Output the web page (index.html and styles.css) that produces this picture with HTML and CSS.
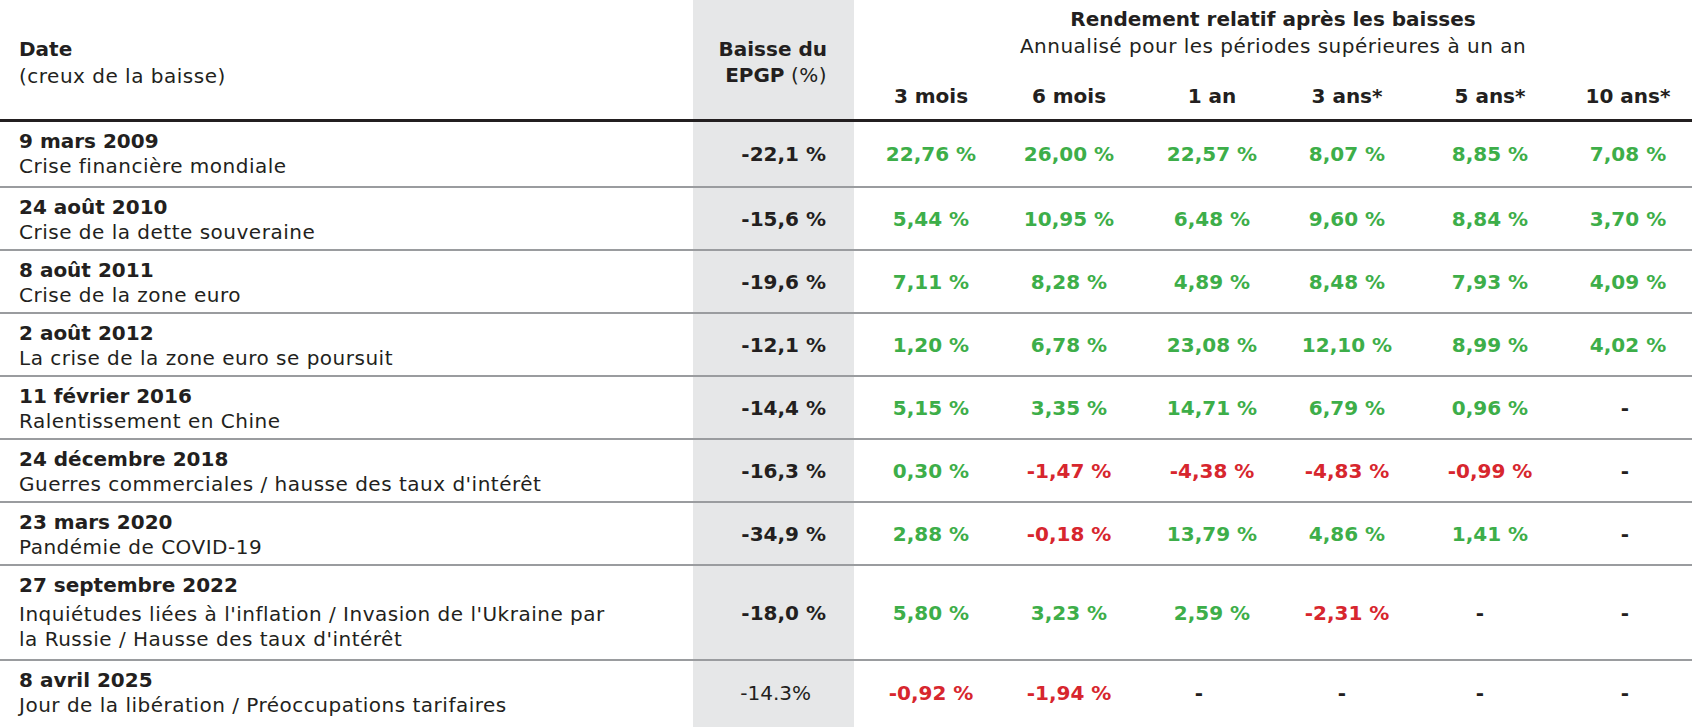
FILE: index.html
```html
<!DOCTYPE html>
<html lang="fr">
<head>
<meta charset="utf-8">
<title>Rendement relatif après les baisses</title>
<link rel="stylesheet" href="styles.css">
</head>
<body>
<table class="perf">
  <colgroup>
    <col class="c-date"><col class="c-drop"><col class="c-3m"><col class="c-6m"><col class="c-1y"><col class="c-3y"><col class="c-5y"><col class="c-10y">
  </colgroup>
  <thead>
    <tr class="h-top">
      <th class="h-date" rowspan="2"><div class="when">Date</div><div class="what">(creux de la baisse)</div></th>
      <th class="h-drop" rowspan="2"><b>Baisse du<br>EPGP</b> <span class="reg">(%)</span></th>
      <th class="h-title" colspan="6"><div class="ttl">Rendement relatif après les baisses</div><div class="sub">Annualisé pour les périodes supérieures à un an</div></th>
    </tr>
    <tr class="h-cols">
      <th>3 mois</th><th>6 mois</th><th>1 an</th><th>3 ans*</th><th>5 ans*</th><th class="last">10 ans*</th>
    </tr>
  </thead>
  <tbody>
    <tr class="first">
      <td class="date"><div class="when">9 mars 2009</div><div class="what">Crise financière mondiale</div></td>
      <td class="drop">-22,1&nbsp;%</td>
      <td class="up">22,76&nbsp;%</td><td class="up">26,00&nbsp;%</td><td class="up">22,57&nbsp;%</td><td class="up">8,07&nbsp;%</td><td class="up">8,85&nbsp;%</td><td class="up last">7,08&nbsp;%</td>
    </tr>
    <tr>
      <td class="date"><div class="when">24 août 2010</div><div class="what">Crise de la dette souveraine</div></td>
      <td class="drop">-15,6&nbsp;%</td>
      <td class="up">5,44&nbsp;%</td><td class="up">10,95&nbsp;%</td><td class="up">6,48&nbsp;%</td><td class="up">9,60&nbsp;%</td><td class="up">8,84&nbsp;%</td><td class="up last">3,70&nbsp;%</td>
    </tr>
    <tr>
      <td class="date"><div class="when">8 août 2011</div><div class="what">Crise de la zone euro</div></td>
      <td class="drop">-19,6&nbsp;%</td>
      <td class="up">7,11&nbsp;%</td><td class="up">8,28&nbsp;%</td><td class="up">4,89&nbsp;%</td><td class="up">8,48&nbsp;%</td><td class="up">7,93&nbsp;%</td><td class="up last">4,09&nbsp;%</td>
    </tr>
    <tr>
      <td class="date"><div class="when">2 août 2012</div><div class="what">La crise de la zone euro se poursuit</div></td>
      <td class="drop">-12,1&nbsp;%</td>
      <td class="up">1,20&nbsp;%</td><td class="up">6,78&nbsp;%</td><td class="up">23,08&nbsp;%</td><td class="up">12,10&nbsp;%</td><td class="up">8,99&nbsp;%</td><td class="up last">4,02&nbsp;%</td>
    </tr>
    <tr>
      <td class="date"><div class="when">11 février 2016</div><div class="what">Ralentissement en Chine</div></td>
      <td class="drop">-14,4&nbsp;%</td>
      <td class="up">5,15&nbsp;%</td><td class="up">3,35&nbsp;%</td><td class="up">14,71&nbsp;%</td><td class="up">6,79&nbsp;%</td><td class="up">0,96&nbsp;%</td><td class="na last"><span class="dash">-</span></td>
    </tr>
    <tr>
      <td class="date"><div class="when">24 décembre 2018</div><div class="what">Guerres commerciales / hausse des taux d'intérêt</div></td>
      <td class="drop">-16,3&nbsp;%</td>
      <td class="up">0,30&nbsp;%</td><td class="down">-1,47&nbsp;%</td><td class="down">-4,38&nbsp;%</td><td class="down">-4,83&nbsp;%</td><td class="down">-0,99&nbsp;%</td><td class="na last"><span class="dash">-</span></td>
    </tr>
    <tr>
      <td class="date"><div class="when">23 mars 2020</div><div class="what">Pandémie de COVID-19</div></td>
      <td class="drop">-34,9&nbsp;%</td>
      <td class="up">2,88&nbsp;%</td><td class="down">-0,18&nbsp;%</td><td class="up">13,79&nbsp;%</td><td class="up">4,86&nbsp;%</td><td class="up">1,41&nbsp;%</td><td class="na last"><span class="dash">-</span></td>
    </tr>
    <tr class="tall">
      <td class="date"><div class="when">27 septembre 2022</div><div class="what">Inquiétudes liées à l'inflation / Invasion de l'Ukraine par<br>la Russie / Hausse des taux d'intérêt</div></td>
      <td class="drop">-18,0&nbsp;%</td>
      <td class="up">5,80&nbsp;%</td><td class="up">3,23&nbsp;%</td><td class="up">2,59&nbsp;%</td><td class="down">-2,31&nbsp;%</td><td class="na"><span class="dash">-</span></td><td class="na last"><span class="dash">-</span></td>
    </tr>
    <tr class="final">
      <td class="date"><div class="when">8 avril 2025</div><div class="what">Jour de la libération / Préoccupations tarifaires</div></td>
      <td class="drop light">-14.3%</td>
      <td class="down">-0,92&nbsp;%</td><td class="down">-1,94&nbsp;%</td><td class="na"><span class="dash">-</span></td><td class="na"><span class="dash">-</span></td><td class="na"><span class="dash">-</span></td><td class="na last"><span class="dash">-</span></td>
    </tr>
  </tbody>
</table>
</body>
</html>
```

FILE: styles.css
```css
html, body {
  margin: 0;
  padding: 0;
  background: #ffffff;
}

body {
  font-family: "DejaVu Sans", "Liberation Sans", sans-serif;
  font-size: 20px;
  color: #231f20;
}

.perf {
  width: 1692px;
  border-collapse: collapse;
  table-layout: fixed;
}

.c-date { width: 693px; }
.c-drop { width: 161px; }
.c-3m { width: 154px; }
.c-6m { width: 122px; }
.c-1y { width: 164px; }
.c-3y { width: 106px; }
.c-5y { width: 180px; }
.c-10y { width: 112px; }

th, td {
  padding: 0;
  font-weight: normal;
}

.when {
  font-weight: bold;
  line-height: 25px;
}

.what, .reg, .sub {
  font-weight: normal;
  letter-spacing: 0.5px;
}

.what {
  line-height: 25px;
}

/* header */
.h-date {
  text-align: left;
  vertical-align: top;
  padding: 36px 0 0 19px;
  border-bottom: 3px solid #231f20;
}

.h-date .when,
.h-date .what {
  line-height: 27px;
}

.h-drop {
  background: #e6e7e8;
  text-align: right;
  vertical-align: top;
  padding: 36px 27px 0 0;
  line-height: 26px;
  border-bottom: 3px solid #231f20;
}

.h-title {
  text-align: center;
  vertical-align: top;
  padding: 6px 0 0;
  height: 60px;
  box-sizing: border-box;
  line-height: 27px;
}

.ttl {
  font-weight: bold;
}

.h-cols th {
  font-weight: bold;
  text-align: center;
  vertical-align: top;
  line-height: 25px;
  padding: 24px 0 10px;
  border-bottom: 3px solid #231f20;
}

.h-cols th.last {
  padding-right: 16px;
}

/* body */
tbody td {
  border-bottom: 2px solid #9a9c9f;
  vertical-align: middle;
  text-align: center;
  font-weight: bold;
}

tbody tr.final td {
  border-bottom: none;
  padding-bottom: 6px;
}

td.date {
  text-align: left;
  vertical-align: top;
  padding: 7px 0 4px 19px;
}

tr.first td.date {
  padding-bottom: 7px;
}

tr.tall td.date .what {
  margin-top: 4px;
}

tr.tall td.date {
  padding-bottom: 7px;
}

tr.final td.date {
  padding-bottom: 12px;
}

td.drop {
  background: #e6e7e8;
  text-align: right;
  padding-right: 28px;
}

td.drop.light {
  font-weight: normal;
  padding-right: 43px;
}

td.last {
  padding-right: 16px;
}

td.up { color: #3dae49; }
td.down { color: #d7262e; }
td.na { color: #231f20; }

.dash {
  display: inline-block;
  margin-right: 14px;
}

td:nth-child(5) .dash { margin-right: 26px; }
td:nth-child(6) .dash { margin-right: 10px; }
td:nth-child(7) .dash { margin-right: 20px; }
td:nth-child(8) .dash { margin-right: 6px; }
```
